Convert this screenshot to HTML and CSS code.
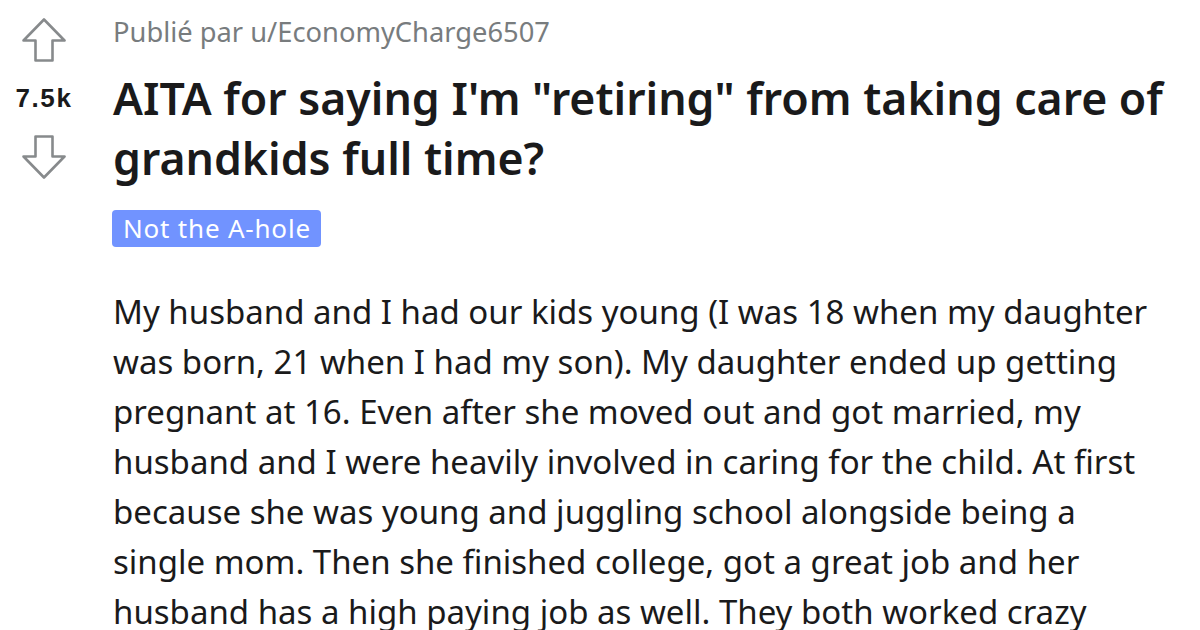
FILE: index.html
```html
<!DOCTYPE html>
<html>
<head>
<meta charset="utf-8">
<link rel="stylesheet" href="styles.css">
</head>
<body>
<div class="post">
  <div class="vote">
    <svg class="arrow" width="44" height="44" viewBox="0 0 44 44"><path d="M22 1.5 L42.5 22.5 H30.5 V42.5 H13.5 V22.5 H1.5 Z" fill="none" stroke="#878a8c" stroke-width="2.6" stroke-linejoin="round"/></svg>
    <div class="score">7.5k</div>
    <svg class="arrow" width="44" height="44" viewBox="0 0 44 44"><path d="M22 42.5 L42.5 21.5 H30.5 V1.5 H13.5 V21.5 H1.5 Z" fill="none" stroke="#878a8c" stroke-width="2.6" stroke-linejoin="round"/></svg>
  </div>
  <div class="content">
    <div class="meta">Publié par u/EconomyCharge6507</div>
    <h1 class="title">AITA for saying I'm "retiring" from taking care of<br>grandkids full time?</h1>
    <span class="flair">Not the A-hole</span>
    <p class="text">My husband and I had our kids young (I was 18 when my daughter<br>was born, 21 when I had my son). My daughter ended up getting<br>pregnant at 16. Even after she moved out and got married, my<br>husband and I were heavily involved in caring for the child. At first<br>because she was young and juggling school alongside being a<br>single mom. Then she finished college, got a great job and her<br>husband has a high paying job as well. They both worked crazy</p>
  </div>
</div>
</body>
</html>
```
FILE: styles.css
```css
html, body {
  margin: 0;
  padding: 0;
  background: #ffffff;
  overflow: hidden;
}
.post {
  display: flex;
  padding-top: 18px;
  width: 1200px;
  height: 630px;
  box-sizing: border-box;
}
.vote {
  width: 88px;
  flex: none;
  display: flex;
  flex-direction: column;
  align-items: center;
}
.arrow {
  display: block;
}
.score {
  font-family: "Liberation Sans", Arial, sans-serif;
  font-weight: bold;
  font-size: 26px;
  letter-spacing: 1.6px;
  color: #1a1a1b;
  line-height: 28px;
  margin-top: 22px;
  margin-bottom: 23px;
}
.content {
  margin-left: 25px;
  flex: 1;
}
.meta {
  font-family: "Noto Sans", sans-serif;
  font-size: 27.3px;
  line-height: 32px;
  color: #787c7e;
  margin-top: -2px;
}
.title {
  font-family: "Noto Sans", sans-serif;
  font-weight: 600;
  font-size: 44.6px;
  line-height: 60px;
  color: #1a1a1b;
  margin: 20px 0 0 0;
  white-space: nowrap;
}
.flair {
  display: inline-block;
  margin-top: 22px;
  margin-left: -1px;
  background: #7193ff;
  color: #ffffff;
  font-family: "Noto Sans", sans-serif;
  font-size: 26px;
  letter-spacing: 0.8px;
  line-height: 37px;
  height: 37px;
  padding: 0 10px 0 11px;
  border-radius: 4px;
}
.text {
  font-family: "Noto Sans", sans-serif;
  font-size: 33px;
  line-height: 50px;
  color: #1a1a1b;
  margin: 40px 0 0 0;
  white-space: nowrap;
}
```
